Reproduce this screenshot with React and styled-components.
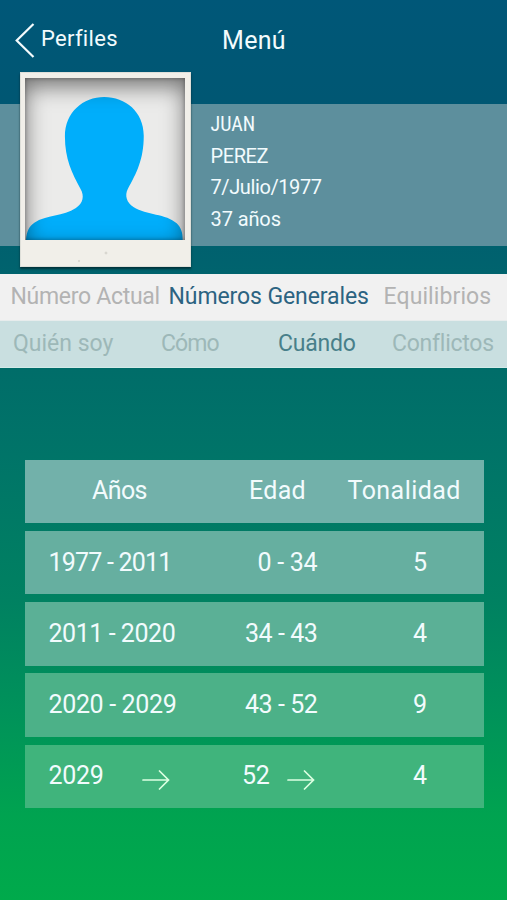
import React from 'react';
import styled, { createGlobalStyle } from 'styled-components';

const GlobalStyle = createGlobalStyle`
  * { box-sizing: border-box; }
  body { margin: 0; }
`;

const Screen = styled.main`
  width: 507px;
  height: 900px;
  overflow: hidden;
  display: flex;
  flex-direction: column;
  color: #f2fbfd;
  font-family: Roboto, 'Liberation Sans', sans-serif;
  font-weight: 400;
  background: linear-gradient(
    #005778 0, #005773 100px, #00626e 262px, #006d69 370px,
    #007468 455px, #008161 600px, #00925a 710px, #00a350 815px, #00aa4b 900px
  );
`;

const Header = styled.header`
  height: 104px;
  flex: none;
  display: grid;
  grid-template-columns: 26px 182px 1fr;
  padding: 22px 0 0 15px;
  align-items: start;
`;

const BackIcon = styled.svg`
  width: 21px;
  height: 37px;
  fill: none;
  stroke: #f4fbfd;
  stroke-width: 2.2;
`;

const Text = styled.span`
  display: block;
  white-space: nowrap;
  letter-spacing: ${(p) => p.$spacing || 0}px;
`;

const BackLabel = styled(Text)`
  font-size: 22px;
  line-height: 33px;
`;

const Title = styled(Text)`
  font-size: 25px;
  line-height: 37px;
  margin-left: -1px;
`;

const Profile = styled.section`
  height: 142px;
  flex: none;
  display: flex;
  align-items: flex-start;
  padding-left: 20px;
  background: #5d8f9d;
`;

const Photo = styled.figure`
  width: 171px;
  height: 195px;
  flex: none;
  margin: -32px 0 0;
  padding: 5px 5px 26px 4px;
  background:
    radial-gradient(circle at 85px 180px, #d9d7d0 0 1px, transparent 1.8px),
    radial-gradient(circle at 58px 188px, #dbd9d2 0 0.8px, transparent 1.6px),
    #f1efe9;
  border: 0.5px solid #dedfd9;
  box-shadow: 0 2px 2px rgba(0, 25, 30, 0.65);
`;

const Portrait = styled.div`
  height: 162px;
  position: relative;
  background: #ebebea;

  &::after {
    content: '';
    position: absolute;
    inset: 0;
    box-shadow: inset 0 8px 22px rgba(0, 0, 0, 0.52), inset 0 0 4px rgba(0, 0, 0, 0.35);
  }
`;

const Silhouette = styled.svg`
  display: block;
  width: 100%;
  height: 100%;
`;

const Details = styled.div`
  margin: 5px 0 0 19.5px;
  font-size: 20px;
  line-height: 31.5px;
`;

const Detail = styled(Text)`
  font-stretch: ${(p) => (p.$narrow ? '75%' : '100%')};
`;

const TabBar = styled.nav`
  height: 47px;
  flex: none;
  display: grid;
  align-items: center;
  grid-template-columns: ${(p) => p.$columns};
  padding-left: ${(p) => p.$indent}px;
  margin-top: ${(p) => p.$gap || 0}px;
  background: ${(p) => p.$background};
  border-bottom: 1px solid ${(p) => p.$edge};
  font-size: 23px;
  line-height: 28px;
`;

const Tab = styled(Text)`
  color: ${(p) => p.$color};
`;

const Table = styled.section`
  margin: 92px 23.5px 0 24.5px;
  display: grid;
  gap: 7.8px;
  font-size: 25px;
  line-height: 30px;
`;

const Row = styled.div`
  height: 63.5px;
  display: grid;
  grid-template-columns: 196px 127px 1fr;
  align-items: center;
  background: ${(p) => p.$background};
`;

const Cell = styled.div`
  display: flex;
  align-items: center;
  padding-left: ${(p) => p.$indent}px;
`;

const Arrow = styled.svg`
  width: 28px;
  height: 20px;
  margin: 8px 0 0 ${(p) => p.$offset}px;
  fill: none;
  stroke: #dcffe2;
  stroke-width: 1.7;
  stroke-linecap: round;
`;

const details = [
  ['JUAN', 0, true],
  ['PEREZ', -0.4],
  ['7/Julio/1977', -0.4],
  ['37 años', -0.1],
];

const mainTabs = [
  ['Número Actual', -0.3, '#b3b3b3'],
  ['Números Generales', -0.1, '#2c6381'],
  ['Equilibrios', 0.1, '#b3b3b3'],
];

const subTabs = [
  ['Quién soy', 0, '#9db8b8'],
  ['Cómo', -0.9, '#9db8b8'],
  ['Cuándo', -0.2, '#487f8a'],
  ['Conflictos', -0.25, '#9db8b8'],
];

const rows = [
  { background: '#66afa0', cells: [['1977 - 2011', 24, -0.8], ['0 - 34', 37, -0.3], ['5', 65.5, 0]] },
  { background: '#5bb096', cells: [['2011 - 2020', 24, -0.45], ['34 - 43', 24.5, -0.45], ['4', 65.5, 0]] },
  { background: '#4cb188', cells: [['2020 - 2029', 24, -0.35], ['43 - 52', 24.5, -0.45], ['9', 65.5, 0]] },
  { background: '#40b47c', cells: [['2029', 24, -0.3, 38.5], ['52', 21.5, -0.3, 17.5], ['4', 65.5, 0]] },
];

export default function App() {
  return (
    <Screen>
      <GlobalStyle />
      <Header>
        <BackIcon viewBox="0 0 21 37">
          <path d="M18.5 2 1.7 18.5 18.5 35" />
        </BackIcon>
        <BackLabel $spacing={0.3}>Perfiles</BackLabel>
        <Title $spacing={0.3}>Menú</Title>
      </Header>
      <Profile>
        <Photo>
          <Portrait>
            <Silhouette viewBox="0 0 481 486" preserveAspectRatio="none">
              <path
                fill="#00aefb"
                d="M238 57C302 57 357 101 357 173C357 244 335 285 309 333C299 353 306 374 326 387C366 412 424 407 456 436C470 449 474 466 474 486H3C5 460 12 445 28 434C64 410 116 416 153 390C175 375 179 354 167 333C141 286 120 243 120 175C120 103 175 57 238 57Z"
              />
            </Silhouette>
          </Portrait>
        </Photo>
        <Details>
          {details.map(([text, spacing, narrow]) => (
            <Detail key={text} $spacing={spacing} $narrow={narrow}>{text}</Detail>
          ))}
        </Details>
      </Profile>
      <TabBar $columns="158px 215px 1fr" $indent={10.5} $gap={27.5} $background="#f1f1f1" $edge="#e7ecec">
        {mainTabs.map(([text, spacing, color]) => (
          <Tab key={text} $spacing={spacing} $color={color}>{text}</Tab>
        ))}
      </TabBar>
      <TabBar $columns="148px 117px 114px 1fr" $indent={13} $background="#c9dfe0" $edge="#d3eae8">
        {subTabs.map(([text, spacing, color]) => (
          <Tab key={text} $spacing={spacing} $color={color}>{text}</Tab>
        ))}
      </TabBar>
      <Table>
        <Row $background="#72b1aa">
          <Cell $indent={67.5}><Text $spacing={-0.6}>Años</Text></Cell>
          <Cell $indent={28.5}><Text $spacing={0.3}>Edad</Text></Cell>
          <Cell $indent={0}><Text $spacing={0.45}>Tonalidad</Text></Cell>
        </Row>
        {rows.map(({ background, cells }) => (
          <Row key={background} $background={background}>
            {cells.map(([text, indent, spacing, arrow]) => (
              <Cell key={text} $indent={indent}>
                <Text $spacing={spacing}>{text}</Text>
                {arrow && (
                  <Arrow viewBox="0 0 28 20" $offset={arrow}>
                    <path d="M1 10H26.5M17.5 1 26.5 10 17.5 19" />
                  </Arrow>
                )}
              </Cell>
            ))}
          </Row>
        ))}
      </Table>
    </Screen>
  );
}
